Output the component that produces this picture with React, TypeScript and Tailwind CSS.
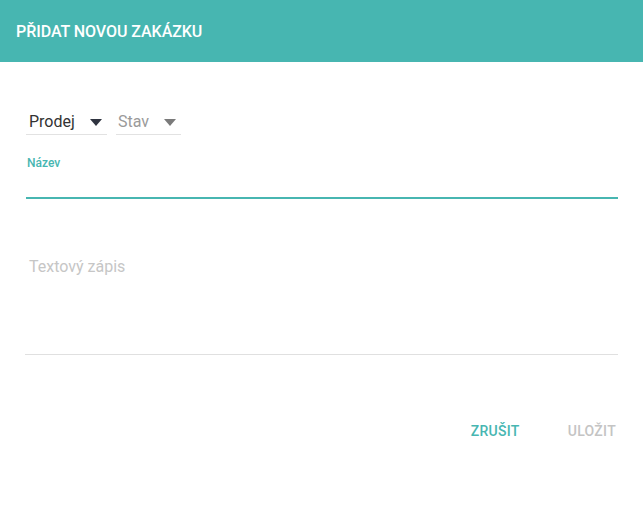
import React from 'react';

const Caret: React.FC<{ color: string }> = ({ color }) => (
  <svg width="12" height="7" viewBox="0 0 12 7" className="shrink-0">
    <path d="M0 0 L12 0 L6 7 Z" fill={color} />
  </svg>
);

const App: React.FC = () => {
  return (
    <div className="w-[643px] h-[525px] bg-white font-['Roboto',sans-serif]">
      {/* Header */}
      <div className="h-[62px] bg-[#47b6b1] flex items-center px-4">
        <h2 className="text-[16px] font-medium text-white tracking-[-0.05px] pt-[1px]">PŘIDAT NOVOU ZAKÁZKU</h2>
      </div>

      <div className="pl-[26px] pr-[25px]">
        {/* Selects */}
        <div className="flex gap-[9px] pt-[42px]">
          <div className="w-[81px] h-[31px] border-b border-[#e2e2e2] flex items-center pt-[6px] pl-[3px] pr-[5px] justify-between">
            <span className="text-[16px] text-[#333]">Prodej</span>
            <Caret color="#2f3440" />
          </div>
          <div className="w-[65px] h-[31px] border-b border-[#e2e2e2] flex items-center pt-[6px] pl-[2px] pr-[5px] justify-between">
            <span className="text-[16px] text-[#9a9a9a]">Stav</span>
            <Caret color="#7a7a7a" />
          </div>
        </div>

        {/* Název */}
        <div className="pt-[21px]">
          <label className="block text-[12px] font-medium text-[#47b6b1] pl-[1px] leading-[15px]">Název</label>
          <div className="h-[26px]" />
          <div className="h-[2px] bg-[#47b6b1]" />
        </div>

        {/* Textový zápis */}
        <div className="pt-[58px]">
          <p className="text-[16px] text-[#c6c6c6] pl-[3px] leading-[20px]">Textový zápis</p>
          <div className="h-[77px]" />
          <div className="h-px bg-[#e0e0e0] -ml-px" />
        </div>

        {/* Actions */}
        <div className="flex justify-end gap-[48px] pt-[66px] pr-[2px]">
          <button className="text-[14px] font-medium text-[#47b6b1] tracking-[0.3px]">ZRUŠIT</button>
          <button className="text-[14px] font-medium text-[#c4c4c4] tracking-[0.3px]">ULOŽIT</button>
        </div>
      </div>
    </div>
  );
};

export default App;
